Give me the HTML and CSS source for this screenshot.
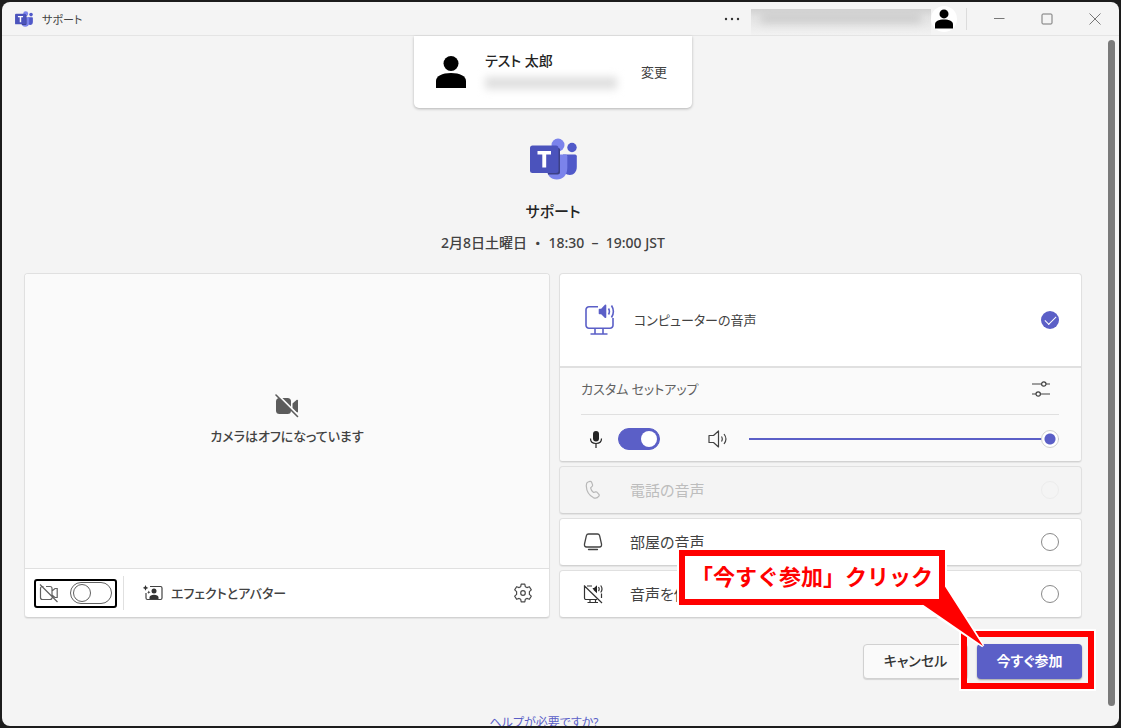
FILE: index.html
```html
<!DOCTYPE html>
<html lang="ja">
<head>
<meta charset="utf-8">
<meta name="viewport" content="width=device-width, initial-scale=1">
<title>サポート</title>
<link rel="stylesheet" href="styles.css">
</head>
<body>
<svg class="defs" aria-hidden="true">
  <symbol id="person" viewBox="0 0 30 32">
    <circle cx="15" cy="7.500" r="7.500"/>
    <path d="M0 32V25C0 20 6 17 15 17s15 3 15 8v7z"/>
  </symbol>
  <symbol id="teams" viewBox="0 0 47 42">
    <circle cx="28" cy="7" r="6.500" fill="#7b83eb"/>
    <circle cx="42" cy="9.500" r="4.700" fill="#5059c9"/>
    <path d="M33 16.500h12a1.800 1.800 0 0 1 1.800 1.800V29c0 4.500-3 8-7 8-4 0-6.800-3-6.800-8z" fill="#5059c9"/>
    <path d="M17 16.500h18.500a1.800 1.800 0 0 1 1.800 1.800V30c0 7-4.500 11.500-10.500 11.500S16.500 37 16.500 30z" fill="#7b83eb"/>
    <path d="M17 10h11.500a1.500 1.500 0 0 1 1.500 1.500v22.500a2.500 2.500 0 0 1-2.500 2.500H18z" fill="#3c4187"/>
    <rect x="0" y="7.500" width="28.500" height="27.500" rx="2.500" fill="#4b53bc"/>
    <path d="M7.500 13h13.500v3.500h-4.800V29.500h-3.900V16.500H7.500z" fill="#fff"/>
  </symbol>
</svg>
<div class="window">
  <header class="titlebar">
    <svg class="titlebar-logo"><use href="#teams"/></svg>
    <h1 class="titlebar-name">サポート</h1>
    <button class="more" aria-label="その他">
      <svg width="16" height="4" viewBox="0 0 16 4" fill="#333"><circle cx="2" cy="2" r="1.200"/><circle cx="8" cy="2" r="1.200"/><circle cx="14" cy="2" r="1.200"/></svg>
    </button>
    <span class="org-mask"><span class="org-blur"></span></span>
    <span class="avatar"><svg width="18" height="20"><use href="#person"/></svg></span>
    <span class="titlebar-divider"></span>
    <button class="win-btn" aria-label="最小化"><svg width="12" height="12" viewBox="0 0 12 12"><path d="M1 5.500h10.500"/></svg></button>
    <button class="win-btn" aria-label="最大化"><svg width="12" height="12" viewBox="0 0 12 12"><rect x="1" y="1" width="10" height="10" rx="1"/></svg></button>
    <button class="win-btn" aria-label="閉じる"><svg width="12" height="12" viewBox="0 0 12 12"><path d="M.5.5l11 11M11.500.5l-11 11"/></svg></button>
  </header>
  <div class="body">
    <main class="content">
      <section class="account">
        <svg class="account-icon"><use href="#person"/></svg>
        <div class="account-info">
          <p class="account-name">テスト 太郎</p>
          <span class="mail-blur"></span>
        </div>
        <button class="change">変更</button>
      </section>
      <svg class="logo"><use href="#teams"/></svg>
      <h2 class="meeting-title">サポート</h2>
      <p class="meeting-time">2月8日土曜日 ・ 18:30 &nbsp;–&nbsp; 19:00 JST</p>

      <div class="panels">
        <section class="camera">
          <div class="preview">
            <svg width="24" height="24" viewBox="0 0 24 24">
              <rect x="1" y="4" width="15" height="16" rx="3.500" fill="#5c5c5c"/>
              <path d="M17.500 9.500l4-3.500c.8-.6 1.500-.2 1.500.6v11c0 .8-.7 1.200-1.500.6l-4-3.500z" fill="#5c5c5c"/>
              <path d="M2.500.5l21 21" stroke="#fafafa" stroke-width="2"/>
              <path d="M1 1l21.500 21.500" stroke="#5c5c5c" stroke-width="1.600" stroke-linecap="round"/>
            </svg>
            <p>カメラはオフになっています</p>
          </div>
          <div class="camera-bar">
            <label class="camera-toggle">
              <svg width="20" height="20" viewBox="0 0 20 20" fill="none" stroke="#616161" stroke-width="1.200">
                <path d="M4.500 3.500h-1A2 2 0 0 0 1.500 5.500v9a2 2 0 0 0 2 2h7.500a2 2 0 0 0 2-2M7 3.500h4a2 2 0 0 1 2 2v8M13 8l3-2.500h2.200v9H16L13 12M1 1.500l17.500 17.500"/>
              </svg>
              <input class="switch" type="checkbox" role="switch" aria-label="カメラ">
            </label>
            <span class="bar-divider"></span>
            <button class="effects">
              <svg width="20" height="16" viewBox="0 0 20 16">
                <path d="M7 1.500H17.500a1.500 1.500 0 0 1 1.500 1.500v10a1.500 1.500 0 0 1-1.500 1.500H4.500a1.500 1.500 0 0 1-1.500-1.500V8" fill="none" stroke="#424242" stroke-width="1.200"/>
                <circle cx="11" cy="6" r="2.500" fill="#333"/>
                <path d="M6.500 14v-1.500c0-2 2-2.800 4.500-2.800s4.500.8 4.500 2.800V14z" fill="#333"/>
                <path d="M2.500 0l.9 2 2 .9-2 .9-.9 2-.9-2-2-.9 2-.9zM5.800 5.500l.5 1.200 1.200.5-1.200.5-.5 1.200-.5-1.200-1.200-.5 1.200-.5z" fill="#333"/>
              </svg>
              <span>エフェクトとアバター</span>
            </button>
            <button class="gear" aria-label="設定">
              <svg width="20" height="20" viewBox="0 0 20 20" fill="none" stroke="#4a4a4a" stroke-width="1.200" stroke-linejoin="round">
                <path d="M8.200 1.200h3.600l.5 2.500 1.600.9 2.500-.9 1.900 3.200-1.900 1.700v2.800l1.900 1.700-1.900 3.200-2.500-.9-1.600.9-.5 2.500H8.200l-.5-2.500-1.600-.9-2.500.9-1.900-3.200 1.900-1.700V8.600L1.700 6.900l1.900-3.200 2.500.9 1.600-.9z"/>
                <circle cx="10" cy="10" r="2.300"/>
              </svg>
            </button>
          </div>
        </section>

        <section class="audio">
          <div class="card computer">
            <label class="computer-head">
              <svg width="30" height="32" viewBox="0 0 30 32" fill="none" stroke="#5b5fc7" stroke-width="1.600">
                <path d="M13 2.800H4A3 3 0 0 0 1 5.800v15.400a3 3 0 0 0 3 3h21a3 3 0 0 0 3-3V14M10 24.500V30M18 24.500V30M5.500 30h17"/>
                <path d="M14.500 5.500h2l4-4.200v12l-4-3.800h-2z" fill="#5b5fc7" stroke-linejoin="round"/>
                <path d="M23.500 4.500c1.200 2 1.200 4 0 6M26.500 1.500c2.500 4 2.500 8 0 12"/>
              </svg>
              <span class="computer-name">コンピューターの音声</span>
              <input class="radio" type="radio" name="audio" checked>
            </label>
            <div class="setup">
              <div class="setup-head">
                <span class="setup-name">カスタム セットアップ</span>
                <button class="tune" aria-label="デバイスの設定">
                  <svg width="20" height="18" viewBox="0 0 20 18" fill="none" stroke="#424242" stroke-width="1.200">
                    <path d="M1 4h9.500M15 4h4M1 14h4M9.500 14H19"/><circle cx="12.800" cy="4" r="2.200"/><circle cx="7.200" cy="14" r="2.200"/>
                  </svg>
                </button>
              </div>
              <div class="setup-controls">
                <svg width="14" height="18" viewBox="0 0 14 18" fill="none" stroke="#242424">
                  <rect x="4" y="1" width="6" height="10.500" rx="3" fill="#242424" stroke="none"/>
                  <path d="M1.500 8.500c0 3 2.200 5 5.500 5s5.500-2 5.500-5M7 13.500V18" stroke-width="1.200"/>
                </svg>
                <input class="switch" type="checkbox" role="switch" aria-label="マイク" checked>
                <svg class="speaker" width="20" height="18" viewBox="0 0 20 18" fill="none" stroke="#424242" stroke-width="1.200" stroke-linejoin="round">
                  <path d="M1 5.500h4.500L10.500 1v16L5.500 12.500H1zM13.500 6.500c1 1.600 1 3.400 0 5M16 4c2.500 3.200 2.500 6.800 0 10"/>
                </svg>
                <input class="volume" type="range" min="0" max="100" value="100" aria-label="音量">
              </div>
            </div>
          </div>
          <label class="card option disabled">
            <svg width="20" height="20" viewBox="0 0 20 20" fill="none" stroke="#b8b8b8" stroke-width="1.200" stroke-linejoin="round">
              <path d="M5 2l2-.6c.8-.2 1.300.2 1.600.9l.9 2.300c.2.7.1 1.200-.4 1.700L7.600 7.800c.3 1.900 1.400 3.500 3 4.700l2-.6c.7-.2 1.200 0 1.600.5l1.700 2c.5.600.4 1.200 0 1.700-1.400 2-3.300 2.700-5.600 1.500C6.200 15.300 3.500 10.800 3.300 6 3.200 4 3.500 2.500 5 2z"/>
            </svg>
            <span class="option-name">電話の音声</span>
            <input class="radio" type="radio" name="audio" disabled>
          </label>
          <label class="card option">
            <svg width="20" height="20" viewBox="0 0 20 20" fill="none" stroke="#424242" stroke-width="1.300" stroke-linecap="round">
              <path d="M5.500 2h9c1.200 0 1.800.6 2.100 1.700l1.900 8.300c.4 2-.6 3-2 3h-13c-1.400 0-2.400-1-2-3l1.900-8.300C3.700 2.600 4.300 2 5.500 2zM5.500 17.500h9"/>
            </svg>
            <span class="option-name">部屋の音声</span>
            <input class="radio" type="radio" name="audio">
          </label>
          <label class="card option">
            <svg width="20" height="20" viewBox="0 0 20 20" fill="none" stroke="#333" stroke-width="1.200">
              <path d="M9 2H4M1.500 1.500V14a1.500 1.500 0 0 0 1.500 1.500h11M18.500 9.500V14M7 15.500v3M12.500 15.500v3M4.500 18.500H15M1 1.500l18 17.500"/>
              <path d="M9.500 4h1.500l3-2.800v8L11 6.500z" fill="#242424" stroke="none"/>
              <path d="M15.500 3c.8 1.200.8 3 0 4.200M17.700 1.500c1.500 2 1.500 5 0 7"/>
            </svg>
            <span class="option-name">音声を使用しない</span>
            <input class="radio" type="radio" name="audio">
          </label>
        </section>
      </div>

      <div class="actions">
        <button class="btn cancel">キャンセル</button>
        <div class="join-wrap">
          <button class="btn join">今すぐ参加</button>
          <span class="highlight"></span>
          <div class="callout">「今すぐ参加」クリック</div>
          <svg class="callout-tail" viewBox="0 0 76 70">
            <path d="M11 16L72 56L36 -2" fill="none" stroke="#fff" stroke-width="3"/>
            <path d="M11 14L72 56L33 -5V13z" fill="red"/>
          </svg>
        </div>
      </div>
      <a class="help" href="#">ヘルプが必要ですか?</a>
    </main>
    <div class="scroll-thumb"></div>
  </div>
</div>
</body>
</html>
```

FILE: styles.css
```css
* {
  box-sizing: border-box;
}

body {
  margin: 0;
  height: 100vh;
  padding: 2px;
  background: #1c1c1c;
  color: #424242;
  font-family: "Noto Sans", "Noto Sans CJK JP", sans-serif;
  font-size: 13px;
  font-feature-settings: "palt";
}

h1, h2, p {
  margin: 0;
}

button {
  padding: 0;
  border: 0;
  background: none;
  color: inherit;
  font: inherit;
  font-feature-settings: inherit;
}

svg {
  display: block;
  flex: none;
}

.defs {
  position: absolute;
  width: 0;
  height: 0;
}

.window {
  display: flex;
  flex-direction: column;
  height: 100%;
  overflow: hidden;
  border-radius: 8px;
  background: #f4f4f4;
}

.titlebar {
  display: flex;
  flex: none;
  align-items: center;
  height: 34px;
  padding: 0 18px 0 13px;
  border-bottom: 1px solid #e4e4e4;
}

.titlebar-logo {
  width: 18px;
  height: 16px;
}

.titlebar-name {
  margin-left: 9px;
  font-size: 11px;
  font-weight: 400;
}

.more {
  margin-left: auto;
  margin-right: 11px;
}

.org-mask {
  align-self: flex-end;
  width: 180px;
  height: 26px;
  padding: 4px 10px;
  overflow: hidden;
  background: linear-gradient(#d2d2d2, #e2e2e2 30%, #f2f2f2);
}

.org-blur {
  display: block;
  height: 10px;
  background: #ccc;
  filter: blur(4px);
}

.avatar {
  display: grid;
  place-items: center;
  width: 26px;
  height: 26px;
  border-radius: 50%;
  background: #fff;
}

.titlebar-divider {
  width: 1px;
  height: 22px;
  margin: 0 26px 0 9px;
  background: #dcdcdc;
}

.win-btn {
  fill: none;
  stroke: #777;
}

.win-btn + .win-btn {
  margin-left: 36px;
}

.body {
  display: flex;
  flex: 1;
  min-height: 0;
}

.content {
  display: flex;
  flex: 1;
  flex-direction: column;
  align-items: center;
  min-width: 0;
  padding: 0 26px 0 22px;
}

.scroll-thumb {
  flex: none;
  width: 7px;
  margin: 4px 4px 20px 0;
  border-radius: 4px;
  background: #7a7a7a;
}

.account {
  display: flex;
  flex: none;
  align-items: center;
  width: 278px;
  height: 72px;
  padding: 0 25px 0 22px;
  border-radius: 0 0 5px 5px;
  background: #fff;
  box-shadow: 0 1px 3px #0004;
}

.account-icon {
  width: 30px;
  height: 32px;
}

.account-info {
  margin-left: 19px;
}

.account-name {
  color: #242424;
  font-size: 14px;
  font-weight: 500;
  line-height: 20px;
}

.mail-blur {
  display: block;
  width: 132px;
  height: 12px;
  margin: 6px 0 4px;
  background: #dedede;
  filter: blur(4px);
}

.change {
  margin-left: auto;
}

.logo {
  width: 47px;
  height: 42px;
  margin-top: 30px;
}

.meeting-title {
  margin-top: 19px;
  color: #242424;
  font-size: 15px;
  font-weight: 500;
  line-height: 24px;
}

.meeting-time {
  margin-top: 8px;
  font-size: 14px;
  font-weight: 500;
  font-feature-settings: normal;
  line-height: 24px;
}

.panels {
  display: grid;
  grid-template-columns: 526fr 523fr;
  gap: 9px;
  width: 100%;
  margin-top: 18px;
}

.camera,
.card {
  border: 1px solid #e0e0e0;
  border-bottom-color: #d2d2d2;
  border-radius: 4px;
  background: #fff;
  box-shadow: 0 1px 1px #0001;
}

.camera {
  display: flex;
  flex-direction: column;
  overflow: hidden;
}

.preview {
  display: flex;
  flex: 1;
  flex-direction: column;
  align-items: center;
  justify-content: center;
  gap: 8px;
  padding-bottom: 2px;
  background: #fafafa;
}

.preview p {
  font-weight: 500;
  line-height: 20px;
}

.camera-bar {
  display: flex;
  align-items: center;
  height: 49px;
  padding: 0 16px 0 9px;
  border-top: 1px solid #e0e0e0;
}

.camera-toggle {
  display: flex;
  align-items: center;
  gap: 11px;
  height: 29px;
  padding: 0 3px;
  border: 2px solid #000;
  border-radius: 3px;
}

.switch {
  display: flex;
  flex: none;
  align-items: center;
  appearance: none;
  width: 42px;
  height: 22px;
  margin: 0;
  padding: 0 2px;
  border: 1px solid #616161;
  border-radius: 11px;
}

.switch::before {
  content: "";
  width: 16px;
  height: 16px;
  border: 1px solid #616161;
  border-radius: 50%;
}

.switch:checked {
  justify-content: flex-end;
  border-color: #5b5fc7;
  background: #5b5fc7;
}

.switch:checked::before {
  border: 0;
  background: #fff;
}

.bar-divider {
  width: 1px;
  height: 34px;
  margin: 0 19px 0 6px;
  background: #e0e0e0;
}

.effects {
  display: flex;
  align-items: center;
  gap: 8px;
  font-weight: 500;
}

.effects span,
.computer-name,
.setup-name,
.option-name,
.change {
  padding-bottom: 2px;
}

.gear {
  margin-left: auto;
}

.audio {
  display: flex;
  flex-direction: column;
  gap: 4px;
  min-width: 0;
}

.computer-head {
  display: flex;
  align-items: center;
  height: 92px;
  padding: 0 22px 0 25px;
}

.computer-name {
  margin-left: 19px;
}

.radio {
  flex: none;
  appearance: none;
  width: 18px;
  height: 18px;
  margin: 0 0 0 auto;
  border: 1px solid #8a8a8a;
  border-radius: 50%;
}

.radio:checked {
  display: grid;
  place-items: center;
  border: 0;
  background: #5b5fc7;
}

.radio:checked::before {
  content: "";
  width: 10px;
  height: 5px;
  margin-bottom: 3px;
  border: solid #fff;
  border-width: 0 0 1px 1px;
  transform: rotate(-45deg);
}

.radio:disabled {
  border-color: #ececec;
}

.setup {
  padding: 0 22px 0 21px;
  border-top: 2px solid #e0e0e0;
  border-radius: 0 0 4px 4px;
  background: #fafafa;
}

.setup-head {
  display: flex;
  align-items: center;
  justify-content: space-between;
  height: 47px;
  padding: 0 8px 4px 0;
  border-bottom: 1px solid #e0e0e0;
  color: #616161;
}

.setup-controls {
  display: flex;
  align-items: center;
  height: 46px;
  padding: 2px 0 0 8px;
}

.setup-controls .switch {
  margin-left: 15px;
}

.speaker {
  margin-left: 48px;
}

.volume {
  flex: 1;
  appearance: none;
  min-width: 0;
  height: 18px;
  margin: 0 0 0 21px;
  background: linear-gradient(#5b5fc7, #5b5fc7) center / 100% 2px no-repeat;
}

.volume::-webkit-slider-thumb {
  appearance: none;
  width: 18px;
  height: 18px;
  border: 1px solid #d1d1d1;
  border-radius: 50%;
  background: radial-gradient(circle, #5b5fc7 5px, #fff 6px);
}

.option {
  display: flex;
  align-items: center;
  height: 48px;
  padding: 0 22px 0 23px;
}

.option-name {
  margin-left: 27px;
  font-size: 15px;
}

.disabled {
  background: #f4f4f4;
  color: #bdbdbd;
}

.actions {
  display: flex;
  flex: none;
  align-self: flex-end;
  gap: 9px;
  margin-top: 26px;
}

.btn {
  display: block;
  width: 105px;
  height: 35px;
  padding-bottom: 3px;
  border-radius: 4px;
  font-size: 14px;
  font-weight: 600;
}

.cancel {
  border: 1px solid #d1d1d1;
  background: #fafafa;
  box-shadow: 0 1px 1px #0002;
  color: #333;
  font-weight: 500;
}

.join-wrap {
  position: relative;
}

.join {
  background: #5b5fc7;
  box-shadow: 0 1px 2px #0005;
  color: #fff;
}

.highlight {
  position: absolute;
  inset: -13px -12px -10px -16px;
  border: 6px solid red;
  outline: 2px solid #fff;
}

.callout {
  position: absolute;
  right: 137px;
  bottom: 74px;
  padding: 0 6px 2px;
  border: 6px solid red;
  outline: 2px solid #fff;
  background: #fff;
  color: red;
  font-size: 22px;
  font-weight: 700;
  font-feature-settings: normal;
  line-height: 41px;
  white-space: nowrap;
}

.callout-tail {
  position: absolute;
  right: 95px;
  bottom: 19px;
  width: 76px;
  height: 70px;
  overflow: visible;
}

.help {
  flex: none;
  margin: 34px 18px 0 0;
  color: #5b5fc7;
  font-size: 12px;
  line-height: 20px;
  text-decoration: none;
}
```
